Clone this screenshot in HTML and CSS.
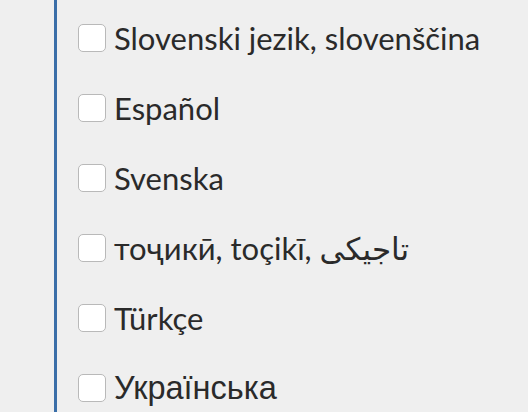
FILE: index.html
```html
<!DOCTYPE html>
<html>
<head>
<meta charset="utf-8">
<link rel="stylesheet" href="styles.css">
</head>
<body>
<div class="panel">
  <ul class="langs">
    <li class="lang"><span class="box"></span><span class="name">Slovenski jezik, slovenščina</span></li>
    <li class="lang"><span class="box"></span><span class="name">Español</span></li>
    <li class="lang"><span class="box"></span><span class="name">Svenska</span></li>
    <li class="lang"><span class="box"></span><span class="name">тоҷикӣ, toçikī, <span class="rtl">تاجیکی‎</span></span></li>
    <li class="lang"><span class="box"></span><span class="name">Türkçe</span></li>
    <li class="lang"><span class="box"></span><span class="name alt">Українська</span></li>
  </ul>
</div>
</body>
</html>
```
FILE: styles.css
```css
html, body {
  margin: 0;
  padding: 0;
  background: #efefef;
  height: 100%;
  overflow: hidden;
}
.panel {
  margin-left: 54px;
  border-left: 3px solid #3a6ea8;
  min-height: 100%;
  padding-top: 3px;
}
.langs {
  list-style: none;
  margin: 0;
  padding: 0 0 0 21px;
}
.lang {
  height: 70px;
  display: flex;
  align-items: center;
  gap: 8px;
}
.box {
  width: 26px;
  height: 26px;
  border: 1px solid #b9b9b9;
  border-radius: 5px;
  background: #fff;
  flex: none;
}
.name {
  font-family: "Lato", sans-serif;
  font-size: 31px;
  font-weight: 400;
  color: #2a2a2a;
  white-space: nowrap;
}
.rtl {
  font-family: "DejaVu Sans", sans-serif;
}
.alt {
  font-family: "Liberation Sans", sans-serif;
  font-size: 32.5px;
}
```
